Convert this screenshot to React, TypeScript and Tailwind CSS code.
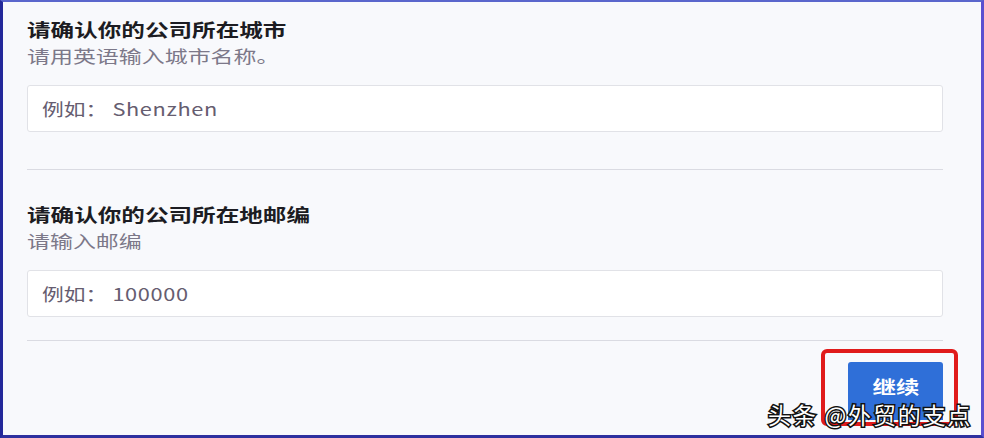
const cjk = "font-['Noto_Sans_CJK_SC','Noto_Sans',sans-serif]";

// The source screenshot is stretched horizontally, so text gets a matching x-scale.
const wide = "inline-block origin-left scale-x-[1.31] whitespace-nowrap";
const wider = "inline-block origin-left scale-x-[1.35] whitespace-nowrap";

function Field({
  title,
  hint,
  example,
}: {
  title: string;
  hint: string;
  example: string;
}) {
  return (
    <section>
      <h2 className="text-[18px] leading-6 font-bold text-[#1c1c22]">
        <span className={wide}>{title}</span>
      </h2>
      <p className="mt-[3px] text-[17px] leading-6 text-[#7c7889]">
        <span className={wider}>{hint}</span>
      </p>
      <div className="mt-[17px] flex h-[47px] w-[916px] items-center rounded-[3px] border border-[#e1e2e7] bg-white pl-[14px] text-[17px] text-[#665d70]">
        <span className="inline-block origin-left scale-x-[1.28] whitespace-nowrap">
          例如：<span className="ml-[4px] tracking-[0.5px]">{example}</span>
        </span>
      </div>
    </section>
  );
}

export default function App() {
  return (
    <div
      className={`${cjk} relative h-[438px] w-[984px] overflow-hidden border-t-2 border-r-[3px] border-b-[3px] border-l-[3px] border-t-[#5a66cc] border-r-[#5a4fd0] border-b-[#2e319f] border-l-[#23289a] bg-[#f8f9fc] pl-[24px] pt-[15px]`}
    >
      <Field title="请确认你的公司所在城市" hint="请用英语输入城市名称。" example="Shenzhen" />
      <div className="mt-[37px] h-px w-[916px] bg-[#dadbe2]" />
      <div className="mt-[32px]">
        <Field title="请确认你的公司所在地邮编" hint="请输入邮编" example="100000" />
      </div>
      <div className="mt-[23px] h-px w-[916px] bg-[#dadbe2]" />
      <div className="mt-[21px] flex w-[916px] justify-end">
        <button className="flex h-[58px] w-[95px] items-start justify-center rounded-t-[3px] bg-[#2f6fd8] pt-[12px] text-[18px] leading-6 font-bold text-white">
          <span className="inline-block scale-x-[1.3]">继续</span>
        </button>
      </div>

      {/* annotation overlay */}
      <div className="absolute left-[818px] top-[347px] h-[77px] w-[137px] rounded-[6px] border-4 border-[#e01b1b]" />
      <div className="absolute left-[765px] top-[397px] text-[23px] leading-[30px] tracking-[1.8px] whitespace-nowrap text-white [-webkit-text-stroke:3px_#111] [paint-order:stroke_fill]">
        头条 @外贸的支点
      </div>
    </div>
  );
}
